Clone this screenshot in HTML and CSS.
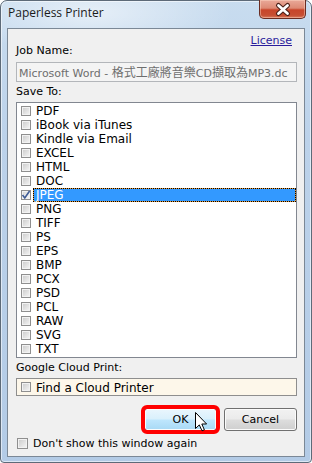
FILE: index.html
```html
<!DOCTYPE html>
<html>
<head>
<meta charset="utf-8">
<link rel="stylesheet" href="styles.css">
</head>
<body>
<div class="window">
  <div class="titlebar">
    <span class="title">Paperless Printer</span>
    <div class="close">
      <svg width="47" height="19" viewBox="0 0 47 19">
        <path d="M19.5 6.5 L28.5 14.5 M28.5 6.5 L19.5 14.5" stroke="#4a2018" stroke-width="5" stroke-linecap="round"/>
        <path d="M19.5 6.5 L28.5 14.5 M28.5 6.5 L19.5 14.5" stroke="#ffffff" stroke-width="2.8" stroke-linecap="round"/>
      </svg>
    </div>
  </div>
  <div class="client">
    <div class="head">
      <span class="label jobname">Job Name:</span>
      <a class="license">License</a>
    </div>
    <div class="textbox">Microsoft Word - <span class="cjk">格式工廠將音樂</span>CD<span class="cjk">擷取為</span>MP3.dc</div>
    <div class="label saveto">Save To:</div>
    <div class="listbox">
      <div class="row"><span class="cb"></span><span class="item">PDF</span></div>
      <div class="row"><span class="cb"></span><span class="item">iBook via iTunes</span></div>
      <div class="row"><span class="cb"></span><span class="item">Kindle via Email</span></div>
      <div class="row"><span class="cb"></span><span class="item">EXCEL</span></div>
      <div class="row"><span class="cb"></span><span class="item">HTML</span></div>
      <div class="row"><span class="cb"></span><span class="item">DOC</span></div>
      <div class="row"><span class="cb checked"><svg width="10" height="10" viewBox="0 0 10 10"><path d="M1.5 5 L3.8 8 L8.6 1" fill="none" stroke="#3f5c95" stroke-width="1.6"/></svg></span><span class="item selected">JPEG</span></div>
      <div class="row"><span class="cb"></span><span class="item">PNG</span></div>
      <div class="row"><span class="cb"></span><span class="item">TIFF</span></div>
      <div class="row"><span class="cb"></span><span class="item">PS</span></div>
      <div class="row"><span class="cb"></span><span class="item">EPS</span></div>
      <div class="row"><span class="cb"></span><span class="item">BMP</span></div>
      <div class="row"><span class="cb"></span><span class="item">PCX</span></div>
      <div class="row"><span class="cb"></span><span class="item">PSD</span></div>
      <div class="row"><span class="cb"></span><span class="item">PCL</span></div>
      <div class="row"><span class="cb"></span><span class="item">RAW</span></div>
      <div class="row"><span class="cb"></span><span class="item">SVG</span></div>
      <div class="row"><span class="cb"></span><span class="item">TXT</span></div>
    </div>
    <div class="label gcp">Google Cloud Print:</div>
    <div class="cloud"><span class="cb"></span><span class="item">Find a Cloud Printer</span></div>
    <div class="buttons">
      <div class="btn ok">OK
        <svg class="cursor" width="13" height="20" viewBox="0 0 13 20">
          <path d="M0.5 0.5 L0.5 16.5 L4.3 12.9 L7 18.8 L9.4 17.8 L6.8 12 L11.6 12 Z" fill="#ffffff" stroke="#000000" stroke-width="1" stroke-linejoin="miter"/>
        </svg>
      </div>
      <div class="btn">Cancel</div>
    </div>
    <div class="dontshow"><span class="cb big"></span><span>Don't show this window again</span></div>
  </div>
</div>
</body>
</html>
```
FILE: styles.css
```css
html, body {
  margin: 0;
  padding: 0;
  width: 312px;
  height: 463px;
  overflow: hidden;
  background: #ffffff;
}

.window {
  box-sizing: border-box;
  width: 312px;
  height: 463px;
  border: 1px solid #5d6a78;
  border-radius: 7px 7px 4px 4px;
  padding: 0 6px 5px 6px;
  background:
    radial-gradient(ellipse 140px 40px at 90px 12px, rgba(255,255,255,0.55), rgba(255,255,255,0) 100%),
    linear-gradient(to bottom, #c8dcef 0%, #bcd2ea 30%, #b3cbe6 100%);
  box-shadow: inset 0 0 0 1px rgba(255,255,255,0.55);
  font-family: "DejaVu Sans", Verdana, sans-serif;
}

.titlebar {
  display: flex;
  justify-content: space-between;
  align-items: flex-start;
  height: 27px;
}

.title {
  font-family: "Open Sans", "Noto Sans", sans-serif;
  font-size: 12px;
  line-height: 16px;
  color: #1b1b1b;
  padding-top: 4px;
  padding-left: 1px;
}

.close {
  width: 47px;
  height: 19px;
  margin-top: -1px;
  margin-right: -1px;
  box-sizing: border-box;
  border: 1px solid #6a2c22;
  border-top: none;
  border-radius: 0 0 5px 5px;
  background: linear-gradient(to bottom, #e9a999 0%, #dd8a74 45%, #c8452a 55%, #c64f33 85%, #d97a5f 100%);
  box-shadow: inset 0 0 0 1px rgba(255,220,200,0.45);
}
.close svg { display: block; margin: -1px 0 0 -1px; }

.client {
  box-sizing: border-box;
  height: 429px;
  border: 1px solid #7b8896;
  background: #f0f0f0;
  padding: 5px 7px 0 8px;
  display: flex;
  flex-direction: column;
}

.label {
  font-size: 11px;
  line-height: 13px;
  color: #000;
}

.head {
  display: flex;
  justify-content: space-between;
  height: 23px;
}
.jobname { align-self: flex-end; }
.license {
  align-self: flex-start;
  font-size: 11px;
  line-height: 13px;
  color: #2a1c9c;
  text-decoration: underline;
  margin-right: 5px;
}

.textbox {
  box-sizing: border-box;
  margin-top: 5px;
  height: 20px;
  border: 1px solid #b3b6ba;
  background: #f4f4f4;
  color: #6e6e6e;
  font-size: 11px;
  line-height: 18px;
  padding-left: 2px;
  white-space: nowrap;
  overflow: hidden;
}
.cjk {
  font-family: "Noto Sans CJK TC", "DejaVu Sans", sans-serif;
  font-size: 12px;
}

.saveto { margin-top: 3px; }

.listbox {
  box-sizing: border-box;
  margin-top: 4px;
  height: 256px;
  border: 1px solid #828790;
  background: #ffffff;
  padding: 1px 0;
}

.row {
  display: flex;
  align-items: center;
  height: 14px;
  padding-left: 4px;
}

.cb {
  box-sizing: border-box;
  width: 10px;
  height: 10px;
  flex: none;
  border: 1px solid #8f8f8f;
  background: linear-gradient(135deg, #c9c9c9 0%, #e2e2e2 55%, #f6f6f6 100%);
  box-shadow: inset 0 0 0 1px #f2f2f2;
}
.cb.checked {
  background: linear-gradient(135deg, #d5d5d5 0%, #ececec 60%, #f8f8f8 100%);
  position: relative;
}
.cb.checked svg { position: absolute; left: -1px; top: -1px; }
.cb.big { width: 11px; height: 11px; }

.item {
  flex: 1;
  box-sizing: border-box;
  height: 14px;
  margin-left: 2px;
  padding-left: 2px;
  border: 1px solid transparent;
  font-size: 12px;
  line-height: 12px;
  color: #000;
  white-space: nowrap;
}
.item.selected {
  color: #ffffff;
  border: 1px dotted #000000;
  background: linear-gradient(#3399ff, #3399ff) padding-box, #e49a3c border-box;
}

.gcp { margin-top: 3px; }

.cloud {
  box-sizing: border-box;
  margin-top: 4px;
  height: 18px;
  border: 1px solid #8e8e8e;
  background: #fdf7ea;
  display: flex;
  align-items: center;
  padding-left: 4px;
}
.cloud .item { line-height: 14px; height: 16px; padding-top: 1px; }

.buttons {
  margin-top: 12px;
  display: flex;
  justify-content: flex-end;
  gap: 7px;
}

.btn {
  box-sizing: border-box;
  width: 73px;
  height: 23px;
  border: 1px solid #707070;
  border-radius: 3px;
  background: linear-gradient(to bottom, #f2f2f2 0%, #ebebeb 48%, #dddddd 52%, #cfcfcf 100%);
  box-shadow: inset 0 0 0 1px #fbfbfb;
  font-size: 11px;
  line-height: 21px;
  text-align: center;
  color: #000;
}
.btn.ok {
  position: relative;
  border-color: #3c7fb1;
  background: linear-gradient(to bottom, #eaf6fd 0%, #d9f0fc 48%, #bee6fd 52%, #a7d9f5 100%);
  outline: 4px solid #ff0000;
  outline-offset: -1px;
}
.cursor {
  position: absolute;
  left: 50px;
  top: 3px;
}

.dontshow {
  margin-top: 6px;
  display: flex;
  align-items: center;
  gap: 5px;
  font-size: 11px;
  line-height: 13px;
  color: #000;
  padding-left: 1px;
}
```
